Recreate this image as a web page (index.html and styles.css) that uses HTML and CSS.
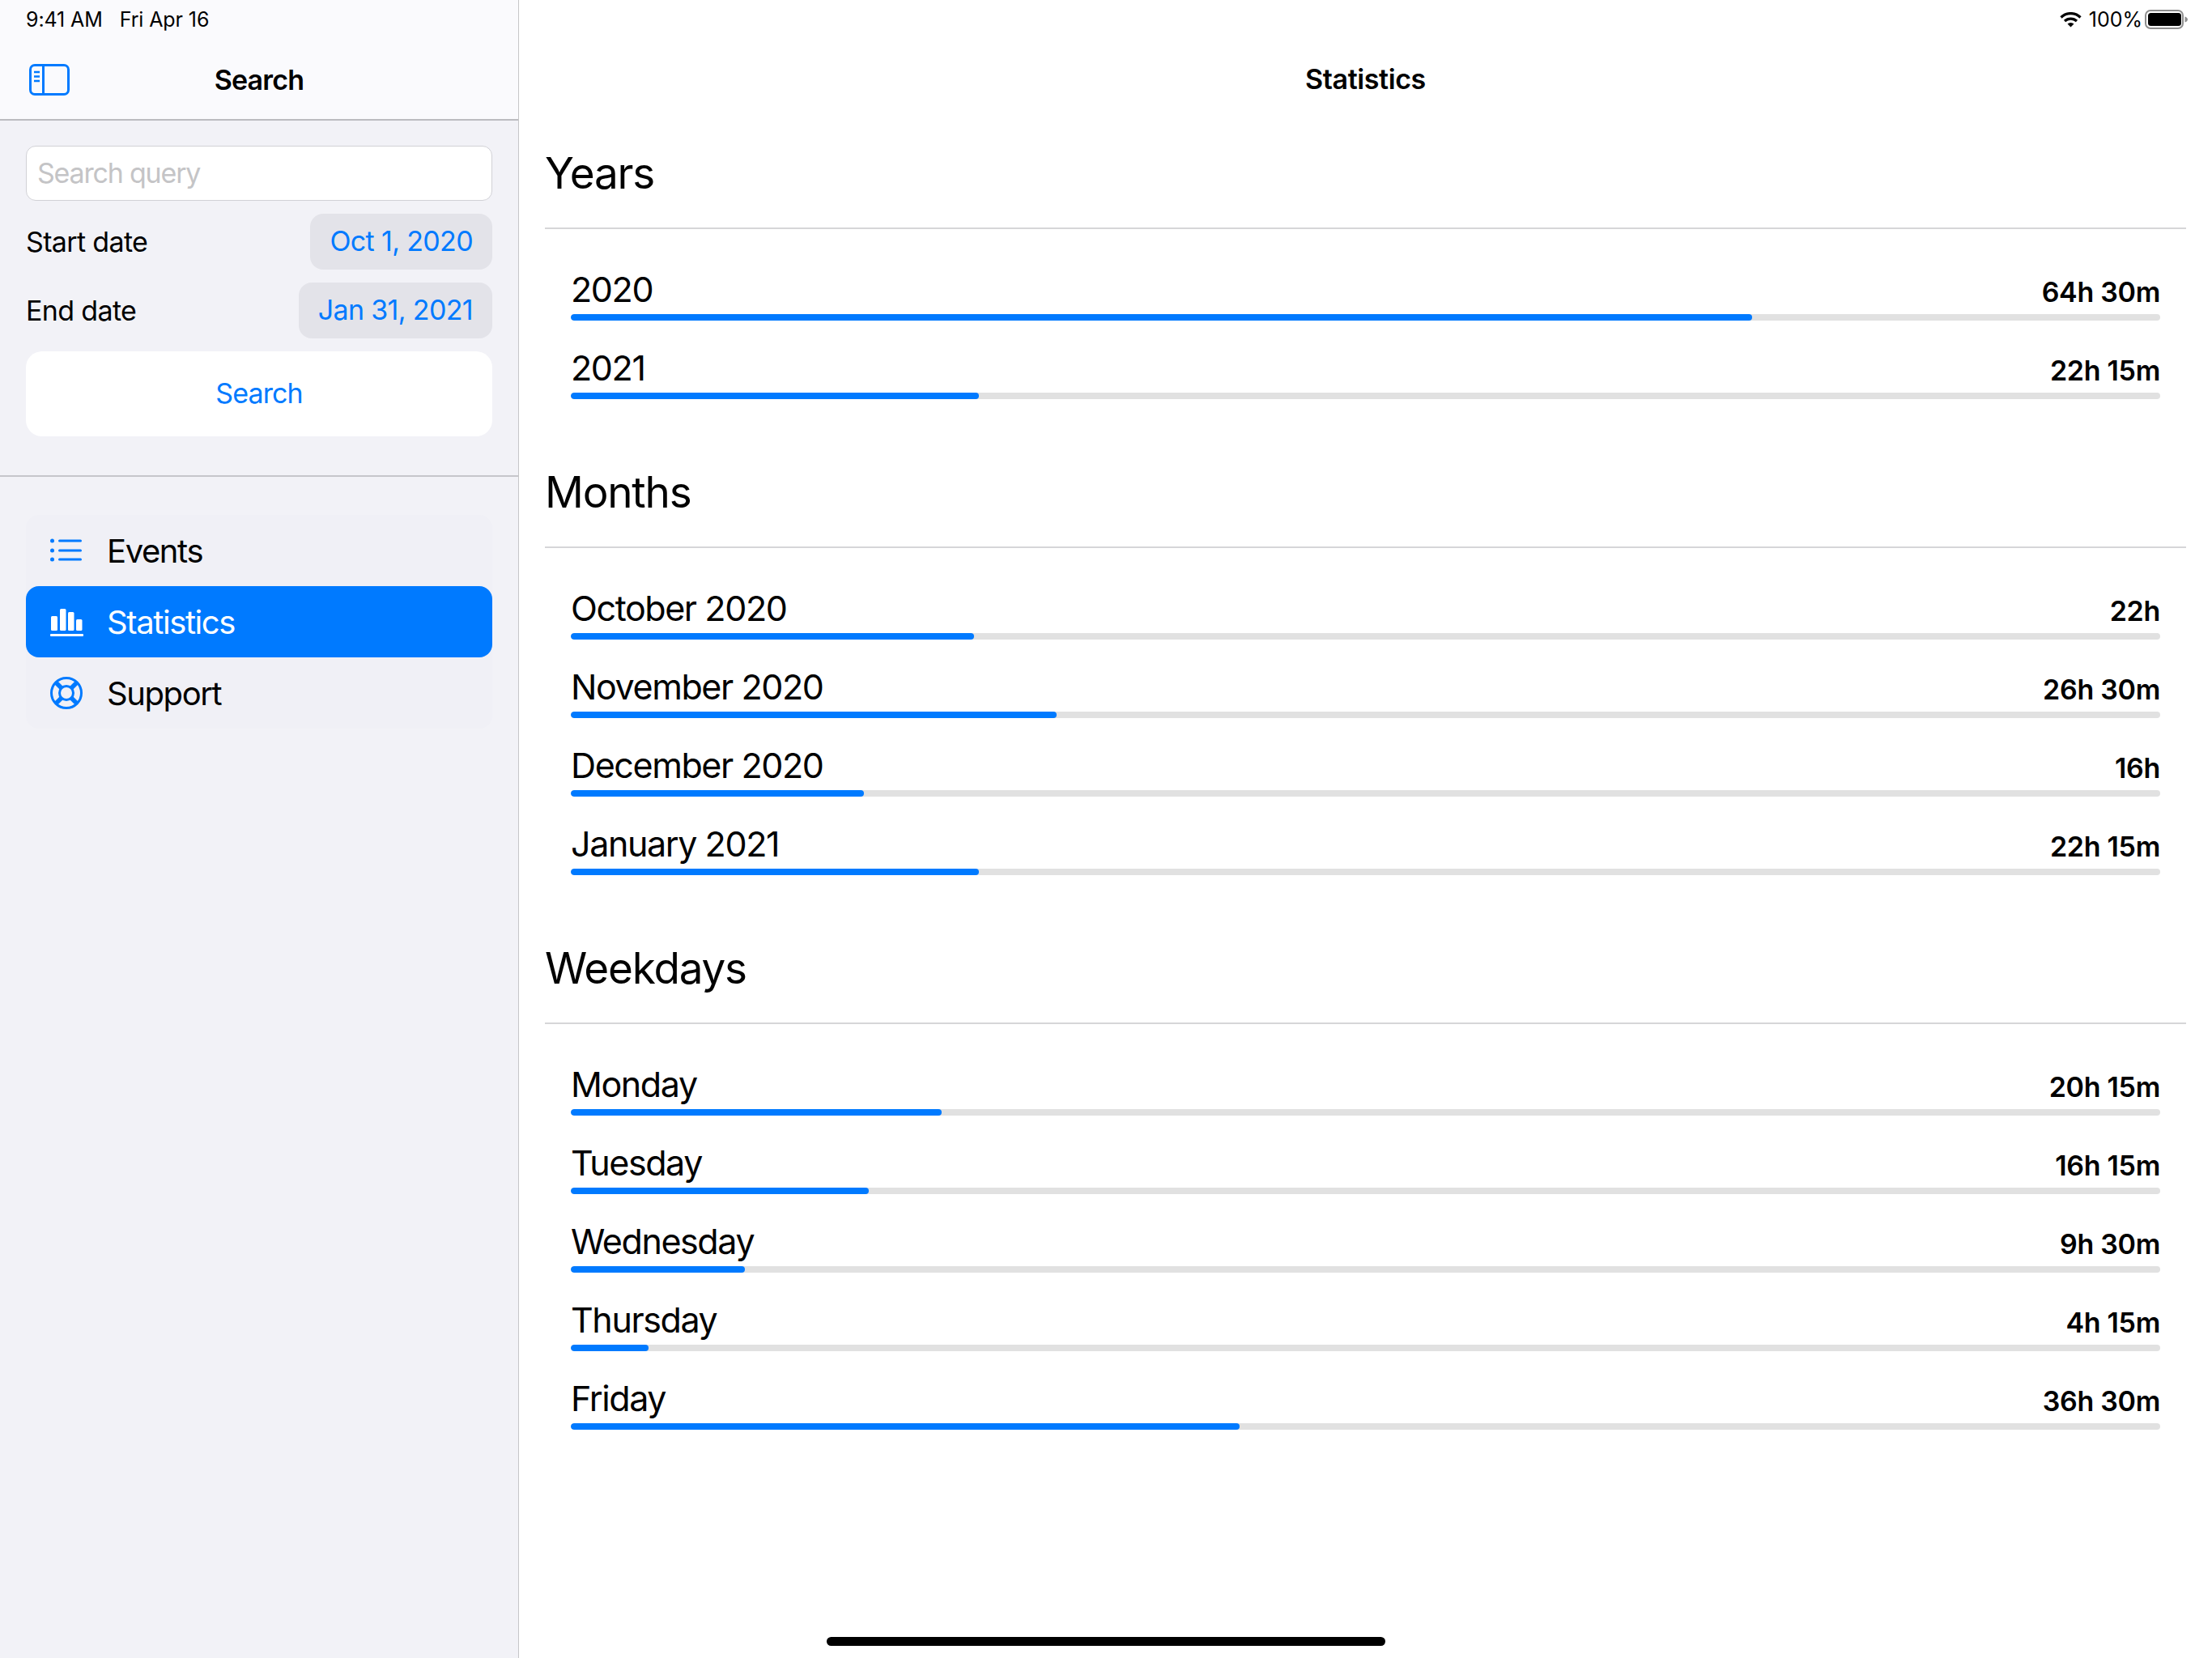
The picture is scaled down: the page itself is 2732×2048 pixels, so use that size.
FILE: index.html
```html
<!DOCTYPE html>
<html lang="en">
<head>
<meta charset="utf-8">
<title>Statistics</title>
<link rel="stylesheet" href="styles.css">
</head>
<body>
<div class="app">
  <aside class="sidebar">
    <header class="side-head">
      <div class="status-left"><span>9:41 AM</span><span>Fri Apr 16</span></div>
      <div class="side-nav">
        <svg class="toggle" viewBox="0 0 50 39" aria-hidden="true"><rect x="1.500" y="1.500" width="47" height="36" rx="5.500" fill="none" stroke="#007aff" stroke-width="3"/><path d="M17.500 2v35" stroke="#007aff" stroke-width="3"/><path d="M6 10h7M6 15.500h7M6 21h7" stroke="#007aff" stroke-width="2.400"/></svg>
        <h2>Search</h2>
      </div>
    </header>
    <section class="form">
      <div class="field">Search query</div>
      <div class="date-row"><span>Start date</span><span class="date">Oct 1, 2020</span></div>
      <div class="date-row"><span>End date</span><span class="date">Jan 31, 2021</span></div>
      <div class="search-btn">Search</div>
    </section>
    <nav class="menu">
      <div class="item">
        <svg class="ico" viewBox="0 0 42 40" aria-hidden="true"><g fill="#007aff"><circle cx="2.500" cy="8" r="2.500"/><circle cx="2.500" cy="20" r="2.500"/><circle cx="2.500" cy="31" r="2.500"/><rect x="10" y="6.500" width="29" height="3" rx="1.500"/><rect x="10" y="18.500" width="29" height="3" rx="1.500"/><rect x="10" y="29.500" width="29" height="3" rx="1.500"/></g></svg>
        <span>Events</span>
      </div>
      <div class="item active">
        <svg class="ico" viewBox="0 0 42 40" aria-hidden="true"><g fill="#fff"><rect x="1" y="13" width="8" height="18" rx="1.500"/><rect x="12" y="4" width="7.500" height="27" rx="1.500"/><rect x="22" y="8" width="7.500" height="23" rx="1.500"/><rect x="32" y="17" width="7.500" height="14" rx="1.500"/><rect x="0" y="35" width="41" height="3" rx="1"/></g></svg>
        <span>Statistics</span>
      </div>
      <div class="item">
        <svg class="ico" viewBox="0 0 42 40" aria-hidden="true"><g fill="none" stroke="#007aff"><circle cx="20" cy="20" r="18.500" stroke-width="3"/><circle cx="20" cy="20" r="8.500" stroke-width="3"/><path d="M7 7l7.500 7.500M33 7l-7.500 7.500M7 33l7.500-7.500M33 33l-7.500-7.500" stroke-width="5.500"/></g></svg>
        <span>Support</span>
      </div>
    </nav>
  </aside>
  <main class="main">
    <div class="status-right">
      <svg class="wifi" viewBox="0.500 1 27 19" aria-hidden="true"><g fill="none" stroke="#000" stroke-width="3.200"><path d="M2 7.500a17 17 0 0 1 24 0"/><path d="M6.500 12a11 11 0 0 1 15 0"/></g><path d="M10 15.500a6 6 0 0 1 8 0l-4 4z" fill="#000"/></svg>
      <span class="pct">100%</span>
      <svg class="battery" viewBox="0 0 53 24" aria-hidden="true"><rect x="1" y="1" width="46" height="22" rx="6" fill="none" stroke="#8e8e8e" stroke-width="2"/><rect x="4" y="4" width="41" height="16" rx="3.500" fill="#000"/><path d="M49.500 8.500c2 .5 3.500 2 3.500 3.500s-1.500 3-3.500 3.500z" fill="#8e8e8e"/></svg>
    </div>
    <h1 class="title">Statistics</h1>
    <section class="group">
      <h3>Years</h3>
      <div class="row"><div class="labels"><span>2020</span><b>64h 30m</b></div><div class="track"><div class="fill" style="width:74.35%"></div></div></div>
      <div class="row"><div class="labels"><span>2021</span><b>22h 15m</b></div><div class="track"><div class="fill" style="width:25.65%"></div></div></div>
    </section>
    <section class="group">
      <h3>Months</h3>
      <div class="row"><div class="labels"><span>October 2020</span><b>22h</b></div><div class="track"><div class="fill" style="width:25.36%"></div></div></div>
      <div class="row"><div class="labels"><span>November 2020</span><b>26h 30m</b></div><div class="track"><div class="fill" style="width:30.55%"></div></div></div>
      <div class="row"><div class="labels"><span>December 2020</span><b>16h</b></div><div class="track"><div class="fill" style="width:18.44%"></div></div></div>
      <div class="row"><div class="labels"><span>January 2021</span><b>22h 15m</b></div><div class="track"><div class="fill" style="width:25.65%"></div></div></div>
    </section>
    <section class="group">
      <h3>Weekdays</h3>
      <div class="row"><div class="labels"><span>Monday</span><b>20h 15m</b></div><div class="track"><div class="fill" style="width:23.34%"></div></div></div>
      <div class="row"><div class="labels"><span>Tuesday</span><b>16h 15m</b></div><div class="track"><div class="fill" style="width:18.73%"></div></div></div>
      <div class="row"><div class="labels"><span>Wednesday</span><b>9h 30m</b></div><div class="track"><div class="fill" style="width:10.95%"></div></div></div>
      <div class="row"><div class="labels"><span>Thursday</span><b>4h 15m</b></div><div class="track"><div class="fill" style="width:4.9%"></div></div></div>
      <div class="row"><div class="labels"><span>Friday</span><b>36h 30m</b></div><div class="track"><div class="fill" style="width:42.07%"></div></div></div>
    </section>
  </main>
</div>
<div class="home"></div>
</body>
</html>
```
FILE: styles.css
```css
* { box-sizing: border-box; }
html, body { margin: 0; height: 100%; }
body { font-family: Inter, "Liberation Sans", sans-serif; color: #000; background: #fff; overflow: hidden; }
.app { display: flex; height: 2048px; }

.sidebar { width: 641px; flex: none; background: #f2f2f7; border-right: 1px solid #c6c6c8; }
.side-head { height: 149px; background: #fafafd; border-bottom: 2px solid #bcbcc0; padding-top: 10px; }
.status-left { display: flex; gap: 21px; padding-left: 32px; font-size: 25px; line-height: 28px; letter-spacing: -0.1px; }
.side-nav { position: relative; display: flex; justify-content: center; align-items: center; height: 88px; margin-top: 16px; }
.side-nav h2 { margin: 0; font-size: 34px; font-weight: 600; letter-spacing: -0.8px; }
.toggle { position: absolute; left: 36px; top: 25px; width: 50px; height: 39px; }

.form { padding: 31px 32px 0; height: 440px; border-bottom: 2px solid #c6c6cb; }
.field { height: 68px; background: #fff; border: 1px solid #d1d1d6; border-radius: 12px; padding-left: 13px; line-height: 66px; font-size: 34px; letter-spacing: -1.2px; color: #c4c4c6; }
.date-row { display: flex; justify-content: space-between; align-items: center; height: 69px; margin-top: 16px; font-size: 34px; letter-spacing: -0.65px; }
.date { height: 69px; line-height: 67px; padding: 0 24px; border-radius: 16px; background: #e3e3e9; color: #007aff; }
.search-btn { height: 105px; margin-top: 16px; line-height: 103px; text-align: center; background: #fff; border-radius: 20px; color: #007aff; font-size: 34px; letter-spacing: -0.9px; }

.menu { margin: 47px 32px 0; background: #f0f0f6; border-radius: 16px; }
.item { display: flex; align-items: center; height: 88px; padding-left: 30px; gap: 28px; font-size: 40px; letter-spacing: -1.4px; border-radius: 16px; }
.item.active { background: #007aff; color: #fff; }
.ico { width: 42px; height: 40px; flex: none; }

.main { position: relative; flex: 1; min-width: 0; padding: 0 32px; }
.status-right { position: absolute; top: 10px; right: 30px; display: flex; align-items: center; font-size: 25px; line-height: 28px; }
.wifi { width: 27px; height: 19px; }
.pct { margin: 0 3px 0 9px; }
.battery { width: 53px; height: 24px; }
.title { margin: 0; padding: 71px 0 28px; text-align: center; font-size: 34px; line-height: 54px; font-weight: 600; letter-spacing: -0.4px; }

.group { margin-bottom: 32px; }
.group h3 { margin: 0 0 38px; padding: 25px 0 31px; border-bottom: 2px solid #d6d6d8; font-size: 53px; line-height: 72px; font-weight: 400; letter-spacing: -1.2px; }
.row { margin: 0 32px; height: 97px; }
.labels { display: flex; justify-content: space-between; align-items: flex-end; height: 64px; }
.labels span { font-size: 43px; line-height: 56px; letter-spacing: -1.4px; }
.labels b { font-size: 34px; line-height: 46px; padding-bottom: 1px; font-weight: 600; letter-spacing: -0.3px; }
.track { height: 8px; margin-top: 3px; background: #e1e1e1; border-radius: 4px; overflow: hidden; }
.fill { height: 8px; background: #007aff; border-radius: 4px; }

.home { position: absolute; left: 1021px; top: 2022px; width: 690px; height: 11px; background: #000; border-radius: 6px; }
```
